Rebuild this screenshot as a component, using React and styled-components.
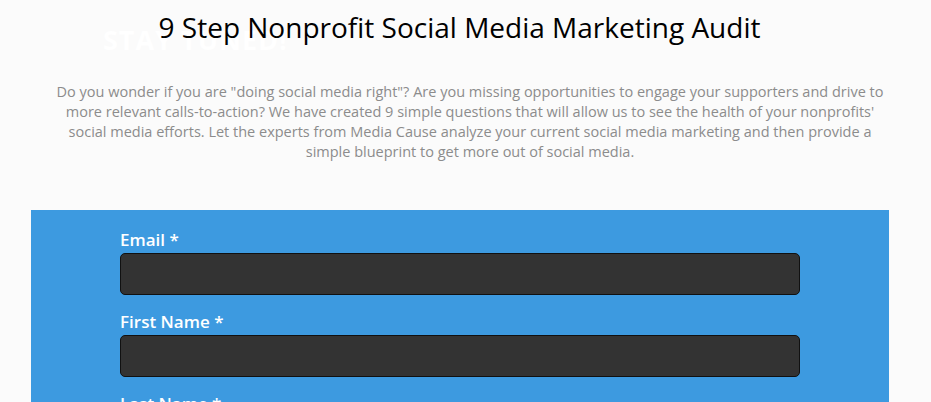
import React from "react";
import styled, { createGlobalStyle } from "styled-components";

const GlobalStyle = createGlobalStyle`
  html, body {
    margin: 0;
    padding: 0;
    background: #fbfbfb;
    font-family: "Open Sans", "Liberation Sans", sans-serif;
    overflow: hidden;
  }
`;

const Page = styled.div`
  position: relative;
  width: 931px;
  min-height: 402px;
  background: #fbfbfb;
`;

// faint heading left behind the title
const Ghost = styled.div`
  position: absolute;
  left: 103px;
  top: 21px;
  font-size: 27px;
  font-weight: 700;
  letter-spacing: 1px;
  color: #ffffff;
`;

const Title = styled.h1`
  position: relative;
  margin: 0;
  padding: 7px 12px 0 0;
  text-align: center;
  font-size: 28px;
  font-weight: 400;
  line-height: 40px;
  color: #000;
`;

const Intro = styled.p`
  margin: 35px 0 0 30px;
  width: 880px;
  text-align: center;
  font-size: 14.5px;
  line-height: 20px;
  color: #8c8c8c;
`;

const FormPanel = styled.div`
  margin: 48px 0 0 31px;
  width: 858px;
  background: #3d9ae0;
  padding: 19px 0 20px;
`;

const Field = styled.div`
  width: 680px;
  margin: 0 auto 16px;
  display: flex;
  flex-direction: column;
`;

const Label = styled.label`
  font-size: 17px;
  font-weight: 600;
  color: #fff;
  line-height: 22px;
  margin-bottom: 2px;
`;

const Input = styled.input`
  box-sizing: border-box;
  height: 42px;
  width: 100%;
  background: #333;
  border: 1px solid #111;
  border-radius: 5px;
  outline: none;
`;

const fields = ["Email *", "First Name *", "Last Name *"];

export default function App() {
  return (
    <Page>
      <GlobalStyle />
      <Ghost>STAY TUNED!</Ghost>
      <Title>9 Step Nonprofit Social Media Marketing Audit</Title>
      <Intro>
        Do you wonder if you are "doing social media right"? Are you missing opportunities to engage your supporters and drive to
        <br />
        more relevant calls-to-action? We have created 9 simple questions that will allow us to see the health of your nonprofits'
        <br />
        social media efforts. Let the experts from Media Cause analyze your current social media marketing and then provide a
        <br />
        simple blueprint to get more out of social media.
      </Intro>
      <FormPanel>
        {fields.map((f) => (
          <Field key={f}>
            <Label>{f}</Label>
            <Input />
          </Field>
        ))}
      </FormPanel>
    </Page>
  );
}
